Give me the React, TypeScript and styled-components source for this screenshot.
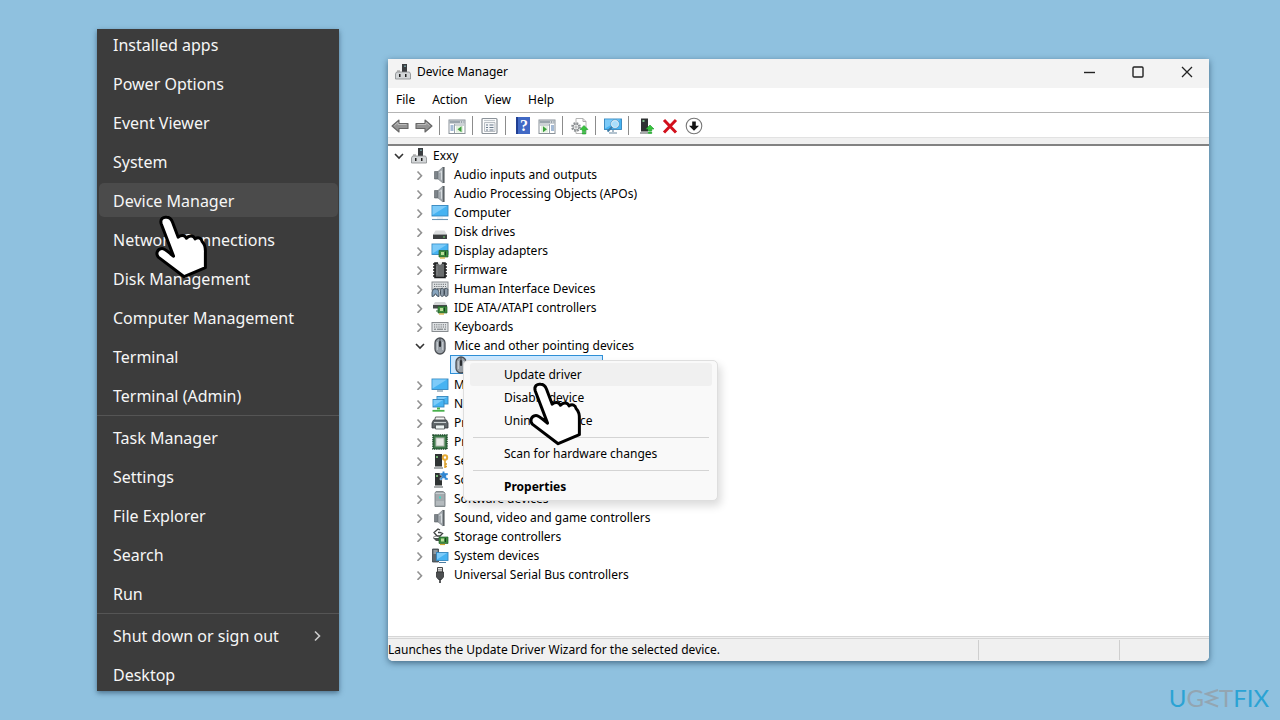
import React from 'react';
import styled, { createGlobalStyle, css } from 'styled-components';

const GlobalStyle = createGlobalStyle`
  *, *::before, *::after { box-sizing: border-box; }
  body {
    margin: 0;
    background: #8fc1df;
    font-family: "Noto Sans", "Open Sans", sans-serif;
    font-size: 12px;
    line-height: 18px;
    color: #000;
  }
  button { font: inherit; color: inherit; border: 0; padding: 0; background: none; text-align: left; }
  ul { list-style: none; margin: 0; padding: 0; }
  svg { display: block; flex: none; }
`;

/* ---------- page ---------- */

const Page = styled.main`
  position: relative;
  min-height: 100vh;
  display: flex;
  align-items: flex-start;
  gap: 49px;
  padding: 29px 71px 29px 97px;
`;

/* ---------- start context menu ---------- */

const StartMenu = styled.nav`
  flex: none;
  width: 242px;
  overflow: hidden;
  background: #3c3c3c;
  box-shadow: 0 2px 5px rgba(20, 50, 75, 0.55);
  color: #f6f6f6;
  font-size: 16px;
  line-height: 22px;
`;

const StartList = styled.ul`
  margin: -5px 0 -2px;
`;

const StartEntry = styled.li`
  position: relative;
  height: 39px;
  padding: 3px 1px 2px 2px;
`;

const StartButton = styled.button<{ $active?: boolean }>`
  display: flex;
  align-items: center;
  justify-content: space-between;
  width: 100%;
  height: 34px;
  padding: 1px 16px 0 14px;
  border-radius: 5px;
  background: ${(p) => (p.$active ? '#4b4b4b' : 'transparent')};
`;

const StartRule = styled.li`
  height: 1px;
  margin: 1px 0;
  background: #555;
`;

/* ---------- window ---------- */

const Window = styled.section`
  flex: 1;
  min-width: 0;
  margin-top: 30px;
  background: #fff;
  border-radius: 0 0 5px 5px;
  box-shadow: 0 2px 6px rgba(20, 50, 75, 0.6);
`;

const TitleBar = styled.header`
  display: flex;
  align-items: center;
  height: 29px;
  padding: 0 2px 3px 6px;
  background: #f3f3f3;
`;

const Title = styled.h1`
  flex: 1;
  margin: 0 0 0 5px;
  font-size: 12px;
  font-weight: 400;
`;

const CaptionButton = styled.button`
  display: flex;
  align-items: center;
  justify-content: center;
  width: 48px;
  height: 26px;
  &:last-child { width: 40px; margin-left: 5px; }
`;

const MenuBar = styled.nav`
  display: flex;
  gap: 17px;
  height: 25px;
  padding: 2px 8px 0;
  border-bottom: 1px solid #b4b4b4;
`;

const MenuBarItem = styled.button`
  height: 20px;
`;

const ToolBar = styled.div`
  display: flex;
  align-items: center;
  height: 24px;
  padding-top: 1px;
`;

const ToolButton = styled.button`
  display: flex;
  align-items: center;
  justify-content: center;
  width: 24px;
  height: 23px;
`;

const ToolRule = styled.span`
  width: 1px;
  height: 19px;
  margin: 0 5px 0 3px;
  background: #8c8c8c;
`;

const Band = styled.div`
  height: 9px;
  background: #f0f0f0;
  border-top: 1px solid #e2e2e2;
  border-bottom: 2px solid #828282;
`;

/* ---------- tree ---------- */

const Tree = styled.ul`
  padding: 0 0 52px 1px;
`;

const Branch = styled.ul`
  padding-left: 21px;
`;

const Leaves = styled.ul`
  margin: 0 0 1px 40px;
`;

const Row = styled.div`
  display: flex;
  align-items: center;
  height: 19px;
`;

const Expander = styled.button`
  display: flex;
  align-items: center;
  justify-content: center;
  width: 20px;
  height: 19px;
`;

const IconSlot = styled.span`
  display: flex;
  justify-content: center;
  width: 20px;
  margin-right: 4px;
`;

const LeafItem = styled.li`
  position: relative;
`;

const Leaf = styled.div`
  display: flex;
  align-items: center;
  width: 153px;
  height: 19px;
  border: 1px solid #2f8fd6;
  background: #cce8ff;
`;

/* ---------- device context menu ---------- */

const Popup = styled.div`
  position: absolute;
  left: 13px;
  top: 5px;
  width: 255px;
  padding: 2px 5px 2px 6px;
  background: #f9f9f9;
  border: 1px solid #dedede;
  border-radius: 5px;
  box-shadow: 3px 5px 8px rgba(0, 0, 0, 0.14);
`;

const PopupItem = styled.button<{ $active?: boolean; $strong?: boolean }>`
  display: block;
  width: 100%;
  height: 23px;
  padding-left: 34px;
  border-radius: 3px;
  ${(p) => p.$active && css`background: #f0f0f0;`}
  ${(p) => p.$strong && css`font-weight: 700;`}
`;

const PopupRule = styled.hr`
  height: 1px;
  margin: 5px 3px 4px;
  border: 0;
  background: #d4d4d4;
`;

const HandSpot = styled.span<{ $left: number; $top: number }>`
  position: absolute;
  z-index: 2;
  left: ${(p) => p.$left}px;
  top: ${(p) => p.$top}px;
  pointer-events: none;
`;

/* ---------- status bar and brand ---------- */

const StatusBar = styled.footer`
  display: flex;
  height: 25px;
  border-top: 3px double #d6d6d6;
  border-radius: 0 0 5px 5px;
  background: #f0f0f0;
  overflow: hidden;
`;

const StatusText = styled.p`
  flex: 1;
  margin: 0;
  padding-top: 2px;
`;

const StatusCell = styled.span<{ $width: number }>`
  width: ${(p) => p.$width}px;
  margin: 1px 0;
  border-left: 1px solid #cfcfcf;
`;

const Brand = styled.div`
  position: absolute;
  right: 11px;
  bottom: 8px;
  display: flex;
  align-items: center;
  font-family: Lato, sans-serif;
  font-size: 24px;
  line-height: 28px;
  color: #2ba3d4;
`;

const BrandGrey = styled.span`
  display: flex;
  align-items: center;
  color: #93a5b1;
`;

/* ---------- drawings ---------- */

const Art = ({ children, size = 18 }: { children: React.ReactNode; size?: number }) => (
  <svg width={size} height={size} viewBox="0 0 18 18" aria-hidden="true">{children}</svg>
);

const Hand = () => (
  <svg width="57" height="68" viewBox="425 75 170 205" aria-hidden="true">
    <path
      d="M449 108C444 92 456 86 465 88C475 88 480 95 483 103L500 148C508 141 519 140 525 151C533 142 546 142 551 153C561 146 570 151 572 161C580 169 583 180 582 195V240L518 267L440 208C431 196 438 184 450 182C460 180 469 194 486 205Z"
      fill="#fff" stroke="#000" strokeWidth="9" strokeLinejoin="round"
    />
  </svg>
);

const Chevron = ({ open }: { open?: boolean }) =>
  open ? (
    <svg width="10" height="10" viewBox="0 0 10 10" aria-hidden="true">
      <path d="M1 3l4 4 4-4" fill="none" stroke="#333" strokeWidth="1.6" />
    </svg>
  ) : (
    <svg width="10" height="10" viewBox="0 0 10 10" aria-hidden="true">
      <path d="M2.500 1.500l4 4.200-4 4.200" fill="none" stroke="#929292" strokeWidth="1.6" />
    </svg>
  );

const HostIcon = () => (
  <Art>
    <path d="M8 1h5v8H8z" fill="#3a3d40" /><path d="M10.500 2.500h1v1.500h-1z" fill="#aee" />
    <path d="M2.500 9h13l1 2v5h-15v-5z" fill="#d3d6d8" stroke="#85898c" strokeWidth=".8" />
    <path d="M5 11h1.500v3H5zM11 11h1.500v3H11z" fill="#222" /><path d="M3 8h3" stroke="#8a8a8a" />
  </Art>
);

const SpeakerIcon = () => (
  <Art>
    <path d="M3.500 5.500h3.500v7.500H3.500z" fill="#7d848a" stroke="#565c60" strokeWidth=".6" />
    <path d="M7 5.500l5-4.500v16L7 13z" fill="#a5abb0" stroke="#7a8186" strokeWidth=".7" />
    <path d="M12.800 1v16" stroke="#5d6367" strokeWidth="1.600" />
    <path d="M8.500 7l2-2.200v9" fill="none" stroke="#dde1e4" strokeWidth=".9" />
  </Art>
);

const Screen = ({ x, y, w, h }: { x: number; y: number; w: number; h: number }) => (
  <g transform={`translate(${x} ${y})`}>
    <rect width={w} height={h} fill="#46b3f2" stroke="#3586bd" strokeWidth=".9" />
    <path d={`M.5 .5H${w - 1}L.5 ${h - 1}z`} fill="#7dcbf9" />
  </g>
);

const ComputerIcon = () => (
  <Art><Screen x={1} y={1.500} w={16} h={10.500} /><path d="M6 14h6" stroke="#dbe5ec" /><path d="M1 15.500h16" stroke="#6f96b3" strokeWidth="1.100" /></Art>
);

const MonitorIcon = () => (
  <Art><Screen x={1} y={3} w={16} h={10.500} /><path d="M6 15h6" stroke="#7891a3" strokeWidth="1.200" /></Art>
);

const DiskIcon = () => (
  <Art>
    <path d="M4.500 7.500h9l2.500 4H2z" fill="#dcdedf" />
    <path d="M2 11h14v5H2z" fill="#3b3e3f" /><path d="M2 11.500h14" stroke="#9a9d9e" />
    <path d="M12 13.500h2v1h-2z" fill="#6fd36f" />
  </Art>
);

const Board = ({ x, y }: { x: number; y: number }) => (
  <g transform={`translate(${x} ${y})`}>
    <path d="M0 0h9v6.500H0z" fill="#3d8b3d" stroke="#24612b" strokeWidth=".7" />
    <path d="M2 1.500h3v3H2z" fill="#b9dd9a" /><path d="M6.500 1v4" stroke="#193f20" />
    <path d="M1 7.500h5" stroke="#d3a933" strokeWidth="1.200" />
  </g>
);

const DisplayIcon = () => <Art><Screen x={1} y={2} w={16} h={10.500} /><Board x={8} y={8.500} /></Art>;

const FirmwareIcon = () => (
  <Art>
    <path d="M4 2h10v14.500H4z" fill="#6a6d6e" stroke="#1d1f20" strokeWidth="1.600" />
    <path d="M2 3h2M2 6h2M2 9h2M2 12h2M2 15h2M14 3h2M14 6h2M14 9h2M14 12h2M14 15h2" stroke="#222" strokeWidth="1.500" />
    <path d="M7 1h4v1.500l-2 1.500-2-1.500z" fill="#eee" /><path d="M6 5v9" stroke="#858889" />
  </Art>
);

const KeyboardShape = ({ y, h }: { y: number; h: number }) => (
  <g transform={`translate(1 ${y})`}>
    <rect width="16" height={h} fill="#dfe2e4" stroke="#7d8286" strokeWidth=".9" />
    <path d="M2 2.300h12M2 4.500h12" stroke="#6c7175" strokeDasharray="1.200 1" /><path d="M2 6.700h12" stroke="#6c7175" strokeDasharray="2 1 6 1" />
  </g>
);

const HidIcon = () => (
  <Art>
    <KeyboardShape y={2} h={8} />
    <path d="M1 12l1.500-3h4L8 12v4.500l-2-.5-1-2H4l-1 2-2 .5z" fill="#86a3bd" stroke="#3c4a56" strokeWidth=".9" />
    <path d="M9.500 10.500c0-3 3.500-3 3.500 0v4c0 2.500-3.500 2.500-3.500 0zM13.500 10.500c0-3 3.500-3 3.500 0v4c0 2.500-3.500 2.500-3.500 0z" fill="#8d9ba8" stroke="#384551" strokeWidth=".9" />
  </Art>
);

const IdeIcon = () => (
  <Art>
    <path d="M4 3h10l2 3H2z" fill="#d3d5d6" /><path d="M2 6h14v3.500H2z" fill="#454a4a" />
    <Board x={7} y={7.500} /><path d="M5 12h3" stroke="#2f6f37" />
  </Art>
);

const KeyboardIcon = () => <Art><KeyboardShape y={4.500} h={9} /></Art>;

const MouseIcon = () => (
  <Art>
    <rect x="4" y="1" width="10" height="16" rx="5" fill="#9aa1a8" stroke="#4b4f54" strokeWidth="1.300" />
    <path d="M6.300 5v8M11.700 5v8" stroke="#d2d7db" strokeWidth=".9" />
    <path d="M9 1.500v3" stroke="#3d4146" /><rect x="7.900" y="4" width="2.200" height="6" rx="1.100" fill="#2b2e32" />
  </Art>
);

const NetworkIcon = () => (
  <Art>
    <Screen x={6} y={1.500} w={11} h={7.500} /><Screen x={2} y={4.500} w={11} h={7.500} />
    <path d="M7.500 12.500v2" stroke="#48b04b" strokeWidth="3" /><path d="M1.500 15.800h12" stroke="#48b04b" strokeWidth="1.800" />
  </Art>
);

const PrinterIcon = () => (
  <Art>
    <path d="M4.500 3h9l1 4h-11z" fill="#f3f3f3" stroke="#555" strokeWidth=".9" />
    <path d="M2.500 6h13l1.500 3v5H1V9z" fill="#60676a" stroke="#33393b" strokeWidth=".8" />
    <path d="M4.500 11h9v4h-9z" fill="#eef5f4" stroke="#454b4d" strokeWidth=".8" /><path d="M3 8.500h12" stroke="#cbd1d2" />
  </Art>
);

const ProcessorIcon = () => (
  <Art>
    <rect x="2" y="2" width="14" height="14" fill="#3f7a4b" stroke="#1f4c2c" strokeWidth="1.500" strokeDasharray="1.500 .7" />
    <rect x="5" y="5" width="8" height="8" fill="#e9ece8" stroke="#b5bdb4" />
  </Art>
);

const Tower = () => (
  <g><path d="M4 2h7v12.500H4z" fill="#2f3333" /><path d="M5 5h2" stroke="#8ee08b" strokeWidth="1.500" /><path d="M3 16h9" stroke="#85898a" strokeWidth="1.400" /></g>
);

const SecurityIcon = () => (
  <Art>
    <Tower />
    <path d="M14 8v8M14 12h2M14 14.500h2" stroke="#d99d27" strokeWidth="1.500" />
    <circle cx="14" cy="5.500" r="2.200" fill="#fff" stroke="#e5aa35" strokeWidth="2" />
  </Art>
);

const ComponentIcon = () => (
  <Art><Tower /><path d="M9 2h2.300a1.300 1.300 0 112.400 0H17v2.300a1.300 1.300 0 100 2.400V9h-3.300a1.300 1.300 0 10-2.400 0H9V6.700a1.300 1.300 0 100-2.400z" fill="#2f86d2" stroke="#fff" strokeWidth=".4" /></Art>
);

const SoftwareIcon = () => (
  <Art>
    <path d="M5 1.500h7l2 1.500v13.500H4V3z" fill="#a3aaae" stroke="#7b8286" strokeWidth=".9" />
    <path d="M4.500 3.500h9M5 12h8M5 14h8" stroke="#cfd4d7" strokeWidth=".8" /><path d="M8 6.500h2v2H8z" fill="#42d6c5" />
  </Art>
);

const StorageIcon = () => (
  <Art>
    <path d="M9 2L7 1 3 4.500 6 8h3l2.500-2.500L9 4.500H7" fill="none" stroke="#3f4242" strokeWidth="1.300" />
    <path d="M2 10h8l3 3H5z" fill="#4d5352" /><path d="M2 9.500l3-1.500" stroke="#777" /><Board x={8} y={9} />
  </Art>
);

const SystemIcon = () => (
  <Art>
    <path d="M1.500 2h6v13h-6z" fill="#5e676d" stroke="#394046" strokeWidth=".8" /><path d="M2.500 4h4M2.500 6h4" stroke="#c4d0d6" />
    <Screen x={5.500} y={5.500} w={11.500} h={8} /><path d="M8 15.500h7" stroke="#4d7da1" />
  </Art>
);

const UsbIcon = () => (
  <Art>
    <path d="M6.500 1.500h5V6h-5z" fill="#e5e5e5" stroke="#444" /><path d="M8 3v1.500M10 3v1.500" stroke="#333" strokeWidth=".8" />
    <path d="M5.500 6h7v5l-2 2.500h-3L5.500 11z" fill="#4c4f51" stroke="#303234" strokeWidth=".8" /><path d="M9 13v4" stroke="#303234" strokeWidth="1.600" />
  </Art>
);

const BackIcon = () => (
  <Art><path d="M1 9l7-6v3.500h9v5H8V15z" fill="#949494" stroke="#666" strokeWidth="1.100" strokeLinejoin="round" /><path d="M3.500 8.500L7 5.500v2h8.500" fill="none" stroke="#bdbdbd" /></Art>
);

const ForwardIcon = () => (
  <Art><path d="M17 9l-7-6v3.500H1v5h9V15z" fill="#949494" stroke="#666" strokeWidth="1.100" strokeLinejoin="round" /><path d="M14.500 8.500L11 5.500v2H2.500" fill="none" stroke="#bdbdbd" /></Art>
);

const PanelIcon = ({ action }: { action?: boolean }) => (
  <Art>
    <rect x="1" y="3" width="16" height="13.500" fill="#fff" stroke="#8a9299" />
    <path d="M1.500 3.500h15v3h-15z" fill="#9aa4ac" /><path d="M12 5h1M14 5h1.500" stroke="#fff" />
    {action ? (
      <g><path d="M11.500 7v9M2 8h9" stroke="#9aa4ac" /><path d="M13 9h3M13 11h3M13 13h3" stroke="#4a76ac" strokeWidth="1.200" /><path d="M3 9h7v6.500H3z" fill="#e3f0df" /><path d="M5 9.300l4 3-4 3z" fill="#3ba03b" /></g>
    ) : (
      <g><path d="M6.500 7v9M7 8h9" stroke="#9aa4ac" /><path d="M2.500 9h3M2.500 11h3M2.500 13h3" stroke="#4a76ac" strokeWidth="1.200" /><path d="M8 9h7v6.500H8z" fill="#e3f0df" /><path d="M13.500 9.300l-4 3 4 3z" fill="#3ba03b" /></g>
    )}
  </Art>
);

const PropertiesIcon = () => (
  <Art>
    <rect x="1" y="1.500" width="15" height="15" rx="1" fill="#fff" stroke="#8b9299" strokeWidth="1.200" />
    <path d="M3 3.500h11" stroke="#c3c9ce" strokeWidth="1.300" />
    <path d="M3.500 5.500h10.500v9H3.500z" fill="#f3f5f7" stroke="#a8afb5" strokeWidth=".8" />
    <path d="M5 8h2M8.500 8h4M5 10.500h2M8.500 10.500h4M5 13h2M8.500 13h4" stroke="#69798a" strokeWidth="1.200" />
  </Art>
);

const QuestionMark = styled.span`
  display: flex;
  align-items: center;
  justify-content: center;
  width: 14px;
  height: 17px;
  border-left: 2px solid #203f93;
  background: #4169c5;
  color: #fff;
  font: 700 16px/17px "Liberation Serif", serif;
`;

const UpdateArrow = ({ x, y }: { x: number; y: number }) => (
  <path transform={`translate(${x} ${y})`} d="M4 0l4 4H5.700v2h-3.400V4H0zM2.300 7h3.400v1.500H2.300z" fill="#38c33c" stroke="#1d9b2a" strokeWidth=".6" />
);

const ScanDriverIcon = () => (
  <Art>
    <path d="M5 1.500h7l3 3v12H5z" fill="#fff" stroke="#b4b4b4" /><path d="M12 1.500v3h3" fill="none" stroke="#aaa" />
    <circle cx="5" cy="10" r="3.800" fill="none" stroke="#8d9194" strokeWidth="2.200" strokeDasharray="1.700 1.300" />
    <circle cx="5" cy="10" r="3" fill="#eee" stroke="#8d9194" /><circle cx="5" cy="10" r="1" fill="#fff" stroke="#8d9194" strokeWidth=".7" />
    <UpdateArrow x={9} y={8.500} />
  </Art>
);

const ScanHardwareIcon = () => (
  <Art>
    <Screen x={0.500} y={2} w={17} h={10.500} /><path d="M9 13v2M5 16h8" stroke="#6988a0" strokeWidth="1.200" />
    <circle cx="11" cy="7" r="3.700" fill="#a9defb" stroke="#e6f4fc" strokeWidth="1.200" /><circle cx="11" cy="7" r="4.300" fill="none" stroke="#4687b2" strokeWidth=".6" />
    <path d="M8 10l-4.500 4.500" stroke="#3b7ba7" strokeWidth="1.800" />
  </Art>
);

const UpdateDeviceIcon = () => (
  <Art><path d="M4 1.500h7v13H4z" fill="#2f3333" /><path d="M5.500 4h2" stroke="#9cebaa" strokeWidth="1.500" /><path d="M3 16h8" stroke="#85898a" strokeWidth="1.400" /><UpdateArrow x={9} y={8} /></Art>
);

const UninstallIcon = () => (
  <Art><path d="M3 3l12 12.500M15 3L3 15.500" stroke="#d2101c" strokeWidth="3" /></Art>
);

const DisableIcon = () => (
  <Art><circle cx="9" cy="9" r="7.800" fill="#fff" stroke="#777" strokeWidth="1.100" /><path d="M7.200 4.500h3.600v4.200H14l-5 5-5-5h3.200z" fill="#151515" /></Art>
);

/* ---------- data ---------- */

const startGroups: string[][] = [
  ['Installed apps', 'Power Options', 'Event Viewer', 'System', 'Device Manager', 'Network Connections', 'Disk Management', 'Computer Management', 'Terminal', 'Terminal (Admin)'],
  ['Task Manager', 'Settings', 'File Explorer', 'Search', 'Run'],
  ['Shut down or sign out', 'Desktop'],
];

type Tool = { label: string; icon: React.ReactNode };

const toolGroups: Tool[][] = [
  [{ label: 'Back', icon: <BackIcon /> }, { label: 'Forward', icon: <ForwardIcon /> }],
  [{ label: 'Show/Hide Console Tree', icon: <PanelIcon /> }],
  [{ label: 'Properties', icon: <PropertiesIcon /> }],
  [{ label: 'Help', icon: <QuestionMark>?</QuestionMark> }, { label: 'Show/Hide Action Pane', icon: <PanelIcon action /> }],
  [{ label: 'Update drivers', icon: <ScanDriverIcon /> }],
  [{ label: 'Scan for hardware changes', icon: <ScanHardwareIcon /> }],
  [{ label: 'Update device driver', icon: <UpdateDeviceIcon /> }, { label: 'Uninstall device', icon: <UninstallIcon /> }, { label: 'Disable device', icon: <DisableIcon /> }],
];

const categories: { name: string; icon: React.ReactNode; open?: boolean }[] = [
  { name: 'Audio inputs and outputs', icon: <SpeakerIcon /> },
  { name: 'Audio Processing Objects (APOs)', icon: <SpeakerIcon /> },
  { name: 'Computer', icon: <ComputerIcon /> },
  { name: 'Disk drives', icon: <DiskIcon /> },
  { name: 'Display adapters', icon: <DisplayIcon /> },
  { name: 'Firmware', icon: <FirmwareIcon /> },
  { name: 'Human Interface Devices', icon: <HidIcon /> },
  { name: 'IDE ATA/ATAPI controllers', icon: <IdeIcon /> },
  { name: 'Keyboards', icon: <KeyboardIcon /> },
  { name: 'Mice and other pointing devices', icon: <MouseIcon />, open: true },
  { name: 'Monitors', icon: <MonitorIcon /> },
  { name: 'Network adapters', icon: <NetworkIcon /> },
  { name: 'Print queues', icon: <PrinterIcon /> },
  { name: 'Processors', icon: <ProcessorIcon /> },
  { name: 'Security devices', icon: <SecurityIcon /> },
  { name: 'Software components', icon: <ComponentIcon /> },
  { name: 'Software devices', icon: <SoftwareIcon /> },
  { name: 'Sound, video and game controllers', icon: <SpeakerIcon /> },
  { name: 'Storage controllers', icon: <StorageIcon /> },
  { name: 'System devices', icon: <SystemIcon /> },
  { name: 'Universal Serial Bus controllers', icon: <UsbIcon /> },
];

/* ---------- parts ---------- */

const DeviceMenu = () => (
  <Popup>
    <PopupItem $active>Update driver</PopupItem>
    <PopupItem>Disable device</PopupItem>
    <PopupItem>Uninstall device</PopupItem>
    <PopupRule />
    <PopupItem>Scan for hardware changes</PopupItem>
    <PopupRule />
    <PopupItem $strong>Properties</PopupItem>
    <HandSpot $left={63} $top={19}><Hand /></HandSpot>
  </Popup>
);

const TreeRow = ({ name, icon, open }: { name: string; icon: React.ReactNode; open?: boolean }) => (
  <Row>
    <Expander aria-label={`Toggle ${name}`} aria-expanded={!!open}><Chevron open={open} /></Expander>
    <IconSlot>{icon}</IconSlot>
    <span>{name}</span>
  </Row>
);

export default function App() {
  return (
    <>
      <GlobalStyle />
      <Page>
        <StartMenu aria-label="Quick links">
          <StartList>
            {startGroups.map((group, g) => (
              <React.Fragment key={g}>
                {g > 0 && <StartRule role="separator" />}
                {group.map((label) => (
                  <StartEntry key={label}>
                    <StartButton $active={label === 'Device Manager'}>
                      {label}
                      {label.startsWith('Shut') && (
                        <svg width="10" height="12" viewBox="0 0 10 12" aria-hidden="true">
                          <path d="M3 1.500l4.500 4.500L3 10.500" fill="none" stroke="#ccc" strokeWidth="1.600" />
                        </svg>
                      )}
                    </StartButton>
                    {label === 'Device Manager' && <HandSpot $left={56} $top={33}><Hand /></HandSpot>}
                  </StartEntry>
                ))}
              </React.Fragment>
            ))}
          </StartList>
        </StartMenu>

        <Window>
          <TitleBar>
            <HostIcon />
            <Title>Device Manager</Title>
            <CaptionButton aria-label="Minimize">
              <svg width="12" height="12"><path d="M0 6.500h11" stroke="#222" strokeWidth="1.400" /></svg>
            </CaptionButton>
            <CaptionButton aria-label="Maximize">
              <svg width="12" height="12"><rect x="1" y="1" width="10" height="10" rx="1" fill="none" stroke="#222" strokeWidth="1.400" /></svg>
            </CaptionButton>
            <CaptionButton aria-label="Close">
              <svg width="12" height="12"><path d="M1 1l10 10M11 1L1 11" stroke="#222" strokeWidth="1.300" /></svg>
            </CaptionButton>
          </TitleBar>
          <MenuBar aria-label="Menu bar">
            {['File', 'Action', 'View', 'Help'].map((m) => <MenuBarItem key={m}>{m}</MenuBarItem>)}
          </MenuBar>
          <ToolBar role="toolbar" aria-label="Tools">
            {toolGroups.map((group, g) => (
              <React.Fragment key={g}>
                {g > 0 && <ToolRule />}
                {group.map((t) => <ToolButton key={t.label} aria-label={t.label}>{t.icon}</ToolButton>)}
              </React.Fragment>
            ))}
          </ToolBar>
          <Band />
          <Tree>
            <li>
              <TreeRow name="Exxy" icon={<HostIcon />} open />
              <Branch>
                {categories.map((c) => (
                  <li key={c.name}>
                    <TreeRow {...c} />
                    {c.open && (
                      <Leaves>
                        <LeafItem>
                          <Leaf><IconSlot><MouseIcon /></IconSlot></Leaf>
                          <DeviceMenu />
                        </LeafItem>
                      </Leaves>
                    )}
                  </li>
                ))}
              </Branch>
            </li>
          </Tree>
          <StatusBar>
            <StatusText>Launches the Update Driver Wizard for the selected device.</StatusText>
            <StatusCell $width={141} />
            <StatusCell $width={90} />
          </StatusBar>
        </Window>

        <Brand>
          <span>U</span>
          <BrandGrey>
            <span>G</span>
            <svg width="15" height="20" viewBox="0 0 15 20" aria-hidden="true">
              <path d="M14 2L2 6l11 4-11 4 12 4.500" fill="none" stroke="#93a5b1" strokeWidth="2" />
            </svg>
            <span>T</span>
          </BrandGrey>
          <span>FIX</span>
        </Brand>
      </Page>
    </>
  );
}
